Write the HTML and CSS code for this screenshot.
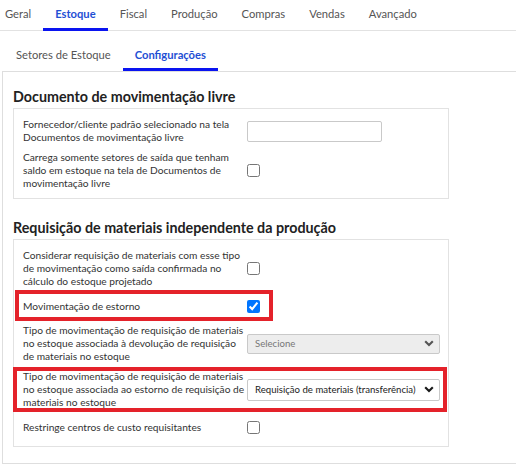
FILE: index.html
```html
<!DOCTYPE html>
<html lang="pt-BR">
<head>
<meta charset="utf-8">
<title>Configurações de Estoque</title>
<link rel="stylesheet" href="styles.css">
</head>
<body>
<nav class="tabs">
  <a class="tab">Geral</a>
  <a class="tab active">Estoque</a>
  <a class="tab">Fiscal</a>
  <a class="tab">Produção</a>
  <a class="tab">Compras</a>
  <a class="tab">Vendas</a>
  <a class="tab">Avançado</a>
</nav>
<nav class="subtabs">
  <a class="subtab">Setores de Estoque</a>
  <a class="subtab active">Configurações</a>
</nav>
<section class="panel">
  <h2 class="section-title">Documento de movimentação livre</h2>
  <div class="group">
    <div class="row">
      <span class="label">Fornecedor/cliente padrão selecionado na tela<br>Documentos de movimentação livre</span>
      <div class="control"><input class="text-input" type="text"></div>
    </div>
    <div class="row">
      <span class="label">Carrega somente setores de saída que tenham<br>saldo em estoque na tela de Documentos de<br>movimentação livre</span>
      <div class="control"><input class="check" type="checkbox"></div>
    </div>
  </div>

  <h2 class="section-title second">Requisição de materiais independente da produção</h2>
  <div class="group">
    <div class="row">
      <span class="label">Considerar requisição de materiais com esse tipo<br>de movimentação como saída confirmada no<br>cálculo do estoque projetado</span>
      <div class="control"><input class="check" type="checkbox"></div>
    </div>
    <div class="row">
      <span class="label">Movimentação de estorno</span>
      <div class="control"><input class="check" type="checkbox" checked></div>
      <span class="highlight hl-estorno"></span>
    </div>
    <div class="row">
      <span class="label">Tipo de movimentação de requisição de materiais<br>no estoque associada à devolução de requisição<br>de materiais no estoque</span>
      <div class="control">
        <div class="select disabled"><span class="select-text">Selecione</span><svg class="chev" width="10" height="7" viewBox="0 0 10 7"><path d="M1.2 1.3 5 5.1 8.8 1.3" fill="none" stroke="currentColor" stroke-width="2.1"/></svg></div>
      </div>
    </div>
    <div class="row">
      <span class="label">Tipo de movimentação de requisição de materiais<br>no estoque associada ao estorno de requisição de<br>materiais no estoque</span>
      <div class="control">
        <div class="select"><span class="select-text">Requisição de materiais (transferência)</span><svg class="chev" width="10" height="7" viewBox="0 0 10 7"><path d="M1.2 1.3 5 5.1 8.8 1.3" fill="none" stroke="currentColor" stroke-width="2.1"/></svg></div>
      </div>
      <span class="highlight hl-tipo"></span>
    </div>
    <div class="row">
      <span class="label">Restringe centros de custo requisitantes</span>
      <div class="control"><input class="check" type="checkbox"></div>
    </div>
  </div>
</section>
</body>
</html>
```
FILE: styles.css
```css
html, body {
  margin: 0;
  padding: 0;
  background: #ffffff;
}
body {
  font-family: Lato, "Open Sans", "Liberation Sans", sans-serif;
  color: #333333;
  overflow: hidden;
}

/* top tabs */
.tabs {
  display: flex;
  padding-left: 0;
  border-bottom: 1px solid #e2e2e2;
}
.tab {
  padding: 6px 12px;
  margin-bottom: -1px;
  border-bottom: 3px solid transparent;
  font-size: 11.2px;
  line-height: 16px;
  color: #555555;
}
.tab:first-child {
  padding-left: 5px;
}
.tab.active {
  color: #1f4fd4;
  font-weight: 700;
  border-bottom-color: #0a14f0;
}

/* sub tabs */
.subtabs {
  display: flex;
  margin-left: 4px;
}
.subtab {
  padding: 16px 12px 5px;
  border-bottom: 3px solid transparent;
  font-size: 11.2px;
  line-height: 16px;
  color: #555555;
}
.subtab.active {
  color: #1f4fd4;
  font-weight: 700;
  border-bottom-color: #0a14f0;
}

/* panel */
.panel {
  margin: 0 0 0 2px;
  border: 1px solid #dedede;
  border-right: none;
  padding: 16px 10px 16px;
}
.section-title {
  margin: 0 0 2px;
  font-size: 14.3px;
  line-height: 18px;
  font-weight: 700;
  color: #222222;
}
.section-title.second {
  margin-top: 20px;
}
.group {
  width: 436px;
  box-sizing: border-box;
  border: 1px solid #e2e2e2;
  padding: 9px 8px 8px 9px;
  display: flex;
  flex-direction: column;
  gap: 7px;
}
.row {
  position: relative;
  display: grid;
  grid-template-columns: 224px 1fr;
  align-items: center;
  min-height: 22px;
}
.label {
  font-size: 10.2px;
  line-height: 13px;
  white-space: nowrap;
  color: #333333;
}
.control {
  display: flex;
  align-items: center;
}
.text-input {
  width: 135px;
  height: 21px;
  box-sizing: border-box;
  margin: 0;
  border: 1px solid #c9c9c9;
  border-radius: 2px;
  background: #ffffff;
}
.check {
  width: 13px;
  height: 13px;
  margin: 0;
}
.select {
  width: 193px;
  height: 22px;
  box-sizing: border-box;
  border: 1px solid #c9c9c9;
  border-radius: 2px;
  padding: 0 5px 0 7px;
  display: flex;
  align-items: center;
  gap: 4px;
  font-size: 9.6px;
  color: #222222;
  background: #ffffff;
}
.select-text {
  flex: 1;
  white-space: nowrap;
}
.select.disabled {
  background: #ededed;
  color: #777777;
  height: 20px;
}
.select.disabled .chev {
  color: #555555;
}
.chev {
  color: #1a1a1a;
  flex: none;
}

/* annotation boxes */
.highlight {
  position: absolute;
  box-sizing: border-box;
  border: 4px solid #e4222a;
  pointer-events: none;
}
.hl-estorno {
  left: -8px;
  top: -5px;
  width: 258px;
  height: 31px;
}
.hl-tipo {
  left: -10px;
  right: -7px;
  top: -3px;
  bottom: -3px;
}
```
